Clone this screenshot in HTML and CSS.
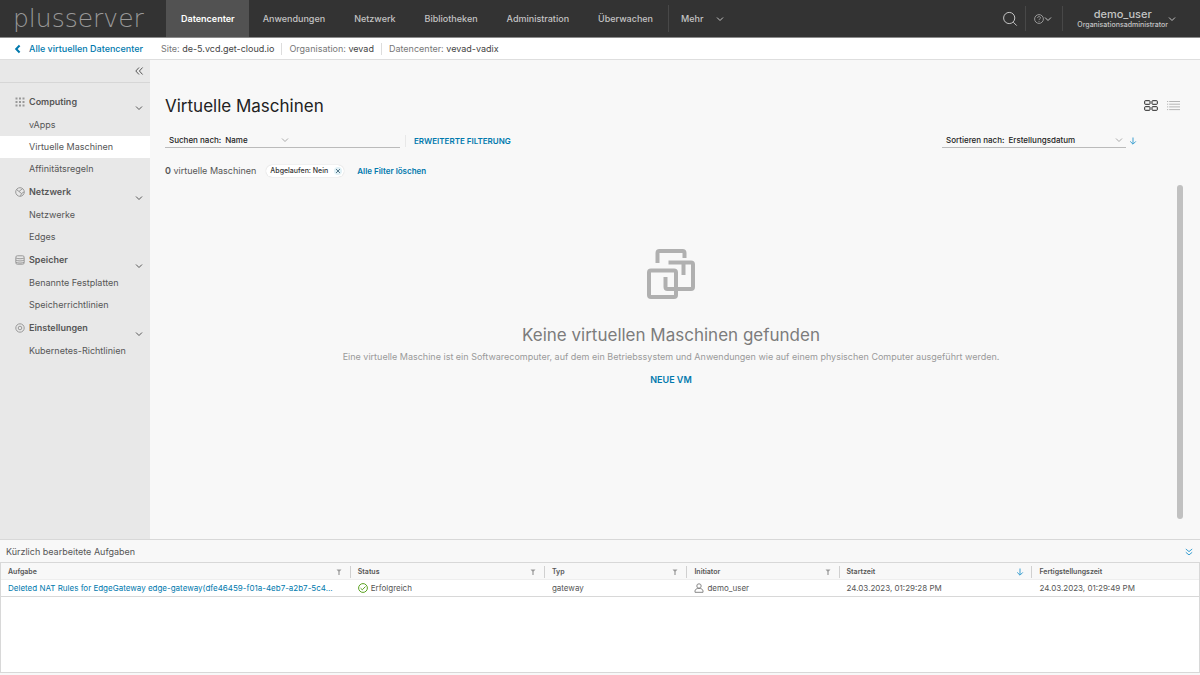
FILE: index.html
```html
<!DOCTYPE html>
<html lang="de">
<head>
<meta charset="utf-8">
<meta name="viewport" content="width=device-width, initial-scale=1">
<title>Virtuelle Maschinen</title>
<link rel="stylesheet" href="styles.css">
</head>
<body>
<svg class="defs" aria-hidden="true">
  <symbol id="chevron" viewBox="0 0 8 8"><path d="M1 2.5 4 5.5 7 2.5"/></symbol>
  <symbol id="arrow-down" viewBox="0 0 8 8"><path d="M4 .5V7M1.2 4.4 4 7.2 6.8 4.4"/></symbol>
  <symbol id="filter" viewBox="0 0 8 8"><path d="M1.5 1.5h5L4.6 3.6V7H3.4V3.6z"/></symbol>
</svg>

<header class="topbar">
  <a class="logo" href="#">plusserver</a>
  <nav class="nav">
    <a class="nav-item active" href="#">Datencenter</a>
    <a class="nav-item" href="#">Anwendungen</a>
    <a class="nav-item" href="#">Netzwerk</a>
    <a class="nav-item" href="#">Bibliotheken</a>
    <a class="nav-item" href="#">Administration</a>
    <a class="nav-item" href="#">Überwachen</a>
  </nav>
  <button class="more">Mehr <svg class="icon s8"><use href="#chevron"/></svg></button>
  <div class="tools">
    <button class="tool search" aria-label="Suchen"><svg class="icon s16" viewBox="0 0 16 16"><circle cx="7.2" cy="7" r="5.6"/><path d="m11.3 11.2 3.4 3.4"/></svg></button>
    <button class="tool help" aria-label="Hilfe"><svg class="icon s10" viewBox="0 0 10 10"><circle cx="5" cy="5" r="4.4"/><path d="M3.6 4c0-1.9 2.9-1.8 2.9-.2C6.500 4.900 5 4.900 5 6.100M5 7v.8"/></svg><svg class="icon s8 bright"><use href="#chevron"/></svg></button>
    <button class="tool user"><span class="user-text"><span class="user-name">demo_user</span><span class="user-role">Organisationsadministrator</span></span><svg class="icon s8 bright"><use href="#chevron"/></svg></button>
  </div>
</header>

<div class="context">
  <a class="back" href="#"><svg class="icon s10 back-icon" viewBox="0 0 10 10"><path d="M6.600 1.500 3.200 5l3.400 3.500"/></svg>Alle virtuellen Datencenter</a>
  <span class="ctx">Site: <b>de-5.vcd.get-cloud.io</b></span>
  <span class="ctx">Organisation: <b>vevad</b></span>
  <span class="ctx">Datencenter: <b>vevad-vadix</b></span>
</div>

<div class="workspace">
  <aside class="sidebar">
    <div class="collapse"><button aria-label="Navigation einklappen"><svg class="icon s10" viewBox="0 0 10 10"><path d="M5 1.500 1.800 5 5 8.500M8.600 1.500 5.400 5l3.200 3.500"/></svg></button></div>
    <nav class="menu">
      <section>
        <button class="group"><svg class="icon s10 dots" viewBox="0 0 10 10"><path d="M.5 1.500h9M.5 5h9M.5 8.500h9"/></svg>Computing<svg class="icon s8 caret"><use href="#chevron"/></svg></button>
        <a href="#">vApps</a>
        <a class="current" href="#">Virtuelle Maschinen</a>
        <a href="#">Affinitätsregeln</a>
      </section>
      <section>
        <button class="group"><svg class="icon s10" viewBox="0 0 10 10"><circle cx="5" cy="5" r="4.300"/><path d="M1.500 2.500 4 4.500 7.500 1.600M4 4.500 6.500 6.500 9 5M6.500 6.500 5.500 9.200"/></svg>Netzwerk<svg class="icon s8 caret"><use href="#chevron"/></svg></button>
        <a href="#">Netzwerke</a>
        <a href="#">Edges</a>
      </section>
      <section>
        <button class="group"><svg class="icon s10" viewBox="0 0 10 10"><rect x=".8" y=".8" width="8.400" height="8.400" rx="1.500"/><path d="M1 3c2 1 6 1 8 0M1 5.200c2 1 6 1 8 0M1 7.300c2 1 6 1 8 0"/></svg>Speicher<svg class="icon s8 caret"><use href="#chevron"/></svg></button>
        <a href="#">Benannte Festplatten</a>
        <a href="#">Speicherrichtlinien</a>
      </section>
      <section>
        <button class="group"><svg class="icon s10" viewBox="0 0 10 10"><circle cx="5" cy="5" r="4.200"/><circle cx="5" cy="5" r="1.800"/></svg>Einstellungen<svg class="icon s8 caret"><use href="#chevron"/></svg></button>
        <a href="#">Kubernetes-Richtlinien</a>
      </section>
    </nav>
  </aside>

  <main class="main">
    <div class="title-row">
      <h1>Virtuelle Maschinen</h1>
      <div class="views">
        <button class="view on" aria-label="Kartenansicht"><svg class="icon" viewBox="0 0 14 11"><rect x=".7" y=".7" width="5.300" height="3.600" rx=".6"/><rect x="8" y=".7" width="5.300" height="3.600" rx=".6"/><rect x=".7" y="6.700" width="5.300" height="3.600" rx=".6"/><rect x="8" y="6.700" width="5.300" height="3.600" rx=".6"/></svg></button>
        <button class="view" aria-label="Listenansicht"><svg class="icon" viewBox="0 0 14 11"><path d="M0 1.500h1.200M0 4.200h1.200M0 6.900h1.200M0 9.600h1.200M2.200 1.500H13M2.200 4.200H13M2.200 6.900H13M2.200 9.600H13"/></svg></button>
      </div>
    </div>

    <div class="filter-row">
      <div class="field search-field">
        <label for="by">Suchen nach:</label>
        <select id="by"><option>Name</option></select>
        <svg class="icon s8"><use href="#chevron"/></svg>
        <input type="text" aria-label="Suchbegriff">
      </div>
      <button class="link advanced">ERWEITERTE FILTERUNG</button>
      <div class="field sort-field">
        <label for="sort">Sortieren nach:</label>
        <select id="sort"><option>Erstellungsdatum</option></select>
        <svg class="icon s8"><use href="#chevron"/></svg>
      </div>
      <button class="direction" aria-label="Absteigend"><svg class="icon s8 blue"><use href="#arrow-down"/></svg></button>
    </div>

    <div class="count-row">
      <span class="count"><b>0</b> virtuelle Maschinen</span>
      <span class="chip">Abgelaufen: Nein <button aria-label="Filter entfernen"><svg class="icon" viewBox="0 0 8 8"><path d="m2 2 4 4M6 2 2 6"/></svg></button></span>
      <button class="link">Alle Filter löschen</button>
    </div>

    <div class="results">
      <div class="empty">
        <svg class="empty-icon" viewBox="0 0 48 50"><path d="M10.500 14V4a2 2 0 0 1 2-2h23a2 2 0 0 1 2 2v5"/><path d="M21.500 13.500H44a2 2 0 0 1 2 2V38a2 2 0 0 1-2 2H20.500a2 2 0 0 1-2-2V28"/><path d="M36.500 14v12"/><rect x="2" y="21.500" width="27" height="26.500" rx="2"/></svg>
        <h2>Keine virtuellen Maschinen gefunden</h2>
        <p>Eine virtuelle Maschine ist ein Softwarecomputer, auf dem ein Betriebssystem und Anwendungen wie auf einem physischen Computer ausgeführt werden.</p>
        <button class="link new-vm">NEUE VM</button>
      </div>
      <div class="scroll-thumb"></div>
    </div>
  </main>
</div>

<section class="tasks">
  <div class="tasks-head"><h3>Kürzlich bearbeitete Aufgaben</h3><button aria-label="Aufgaben einklappen"><svg class="icon s8 blue" viewBox="0 0 8 8"><path d="m.8 1 3.200 2.600L7.200 1M.8 4.300 4 6.900l3.200-2.600"/></svg></button></div>
  <div class="grid">
    <table>
      <colgroup><col class="c-task"><col class="c-status"><col class="c-type"><col class="c-user"><col class="c-start"><col></colgroup>
      <thead>
        <tr>
          <th><div class="th">Aufgabe<svg class="filter"><use href="#filter"/></svg></div></th>
          <th><div class="th">Status<svg class="filter"><use href="#filter"/></svg></div></th>
          <th><div class="th">Typ<svg class="filter"><use href="#filter"/></svg></div></th>
          <th><div class="th">Initiator<svg class="filter"><use href="#filter"/></svg></div></th>
          <th><div class="th">Startzeit<svg class="icon s8 blue"><use href="#arrow-down"/></svg></div></th>
          <th><div class="th">Fertigstellungszeit</div></th>
        </tr>
      </thead>
      <tbody>
        <tr>
          <td><a href="#">Deleted NAT Rules for EdgeGateway edge-gateway(dfe46459-f01a-4eb7-a2b7-5c4...</a></td>
          <td><span class="with-icon"><svg class="icon s10 ok" viewBox="0 0 10 10"><circle cx="5" cy="5" r="4.400"/><path d="m2.600 5.200 1.700 1.600 3.200-3.300"/></svg>Erfolgreich</span></td>
          <td>gateway</td>
          <td><span class="with-icon"><svg class="icon s10 person" viewBox="0 0 10 10"><circle cx="5" cy="3" r="2.200"/><path d="M1 9.300V8c0-1.500 1.500-2.300 2.700-2.500h2.600C7.500 5.700 9 6.500 9 8v1.300z"/></svg>demo_user</span></td>
          <td>24.03.2023, 01:29:28 PM</td>
          <td>24.03.2023, 01:29:49 PM</td>
        </tr>
      </tbody>
    </table>
  </div>
</section>
</body>
</html>
```

FILE: styles.css
```css
* { box-sizing: border-box; }
body {
  margin: 0;
  min-height: 100vh;
  display: flex;
  flex-direction: column;
  background: #f8f8f8;
  color: #565656;
  font: 9px/12px Inter, "Open Sans", sans-serif;
}
button, input, select {
  font: inherit;
  color: inherit;
  background: none;
  border: 0;
  padding: 0;
  margin: 0;
}
button { cursor: pointer; }
a { color: inherit; text-decoration: none; }
h1, h2, h3, p { margin: 0; font-weight: 400; }
.defs { display: none; }

.icon { display: block; flex: none; fill: none; stroke: currentColor; stroke-width: 1; }
.s8 { width: 8px; height: 8px; }
.s10 { width: 10px; height: 10px; }
.s16 { width: 16px; height: 16px; }
.blue { color: #3c9fd0; }

/* Top bar */
.topbar {
  display: flex;
  height: 38px;
  background: #333;
  color: #c4c4c4;
  border-bottom: 1px solid #8c8c8c;
}
.logo {
  width: 166px;
  padding-left: 13px;
  font: 200 25px/38px "DejaVu Sans", sans-serif;
  color: #999;
}
.nav { display: flex; }
.nav-item {
  display: flex;
  align-items: center;
  padding: 0 15px 0 14px;
  font-weight: 500;
}
.nav-item.active { background: #525252; color: #fff; font-weight: 600; padding: 0 14px 0 15px; }
.more {
  display: flex;
  align-items: center;
  gap: 13px;
  margin: 5px 0;
  padding: 0 12px;
  border-left: 1px solid #484848;
  font-weight: 500;
}
.tools { display: flex; margin: 6px 0; margin-left: auto; }
.tool { display: flex; align-items: center; }
.search { padding-right: 7px; }
.help { border-left: 1px solid #484848; border-right: 1px solid #484848; padding: 0 10px 0 8px; color: #999; }
.bright { color: #c4c4c4; }
.user { padding: 0 24px 0 14px; }
.user-text { display: flex; flex-direction: column; align-items: center; }
.user-name { font-size: 11px; font-weight: 500; }
.user-role { font-size: 7px; line-height: 10px; font-weight: 500; }

/* Context bar */
.context {
  display: flex;
  align-items: center;
  height: 22px;
  background: #fff;
  border-bottom: 1px solid #dedede;
  color: #777;
}
.back {
  display: flex;
  align-items: center;
  gap: 6px;
  width: 154px;
  padding-left: 13px;
  color: #0079ad;
  font-weight: 500;
  white-space: nowrap;
}
.back-icon { stroke-width: 2; }
.ctx { padding: 0 7px; }
.ctx + .ctx { border-left: 1px solid #ddd; }
.ctx b { font-weight: 400; color: #444; }

/* Sidebar */
.workspace { display: flex; flex: 1; }
.sidebar { width: 150px; background: #e8e8e8; flex: none; }
.collapse {
  display: flex;
  justify-content: flex-end;
  padding: 6px 6px;
  border-bottom: 1px solid #d6d6d6;
}
.menu { padding-top: 7px; }
.menu section { display: flex; flex-direction: column; }
.group {
  display: flex;
  align-items: center;
  gap: 4px;
  height: 24px;
  padding: 0 7px 0 15px;
  font-weight: 600;
}
.group > .icon:first-child { color: #999; }
.dots { stroke-width: 2; stroke-dasharray: 2 1.5; }
.group .caret { margin-left: auto; margin-top: 12px; }
.menu a { padding: 5px 0 5px 29px; }
.menu .current { background: #fff; }

/* Main area */
.main {
  flex: 1;
  min-width: 0;
  display: flex;
  flex-direction: column;
  padding: 34px 17px 20px 15px;
}
.title-row { display: flex; align-items: center; justify-content: space-between; }
h1 { font-size: 17px; line-height: 24px; color: #222; }
.views { display: flex; gap: 9px; margin: 0 2px 2px 0; }
.view { color: #b5b5b5; }
.view .icon { width: 14px; height: 11px; }
.view.on { color: #222; }

.filter-row { display: flex; align-items: center; margin-top: 15px; }
.field {
  display: flex;
  align-items: center;
  height: 15px;
  padding-left: 4px;
  border-bottom: 1px solid #bbb;
  color: #222;
  font-size: 8px;
  font-weight: 500;
}
.field select { appearance: none; padding-left: 4px; outline: 0; }
.field .icon { color: #aaa; }
.search-field { width: 235px; }
.search-field select { width: 60px; }
.search-field input { flex: 1; min-width: 0; outline: 0; }
.sort-field { width: 184px; margin-left: auto; }
.sort-field select { flex: 1; min-width: 0; }
.sort-field .icon { margin-right: 3px; }
.direction { margin: 0 46px 0 3px; }
.link { color: #0079ad; font-size: 8px; font-weight: 600; }
.advanced { margin-left: 5px; padding-left: 8px; border-left: 1px solid #e8e8e8; }

.count-row { display: flex; align-items: center; margin-top: 17px; }
.count b { font-weight: 600; }
.chip {
  display: flex;
  align-items: center;
  gap: 6px;
  margin: 0 13px 0 10px;
  padding: 0 2px 0 4px;
  border-radius: 6px;
  background: #fff;
  box-shadow: 0 0 1px #bbb;
  font-size: 7px;
  font-weight: 500;
  color: #333;
}
.chip button { border-radius: 50%; background: #e1f1f6; color: #57788a; }
.chip .icon { width: 8px; height: 8px; }

.results { display: flex; flex: 1; margin-top: 8px; }
.empty { flex: 1; display: flex; flex-direction: column; align-items: center; padding-top: 64px; }
.empty-icon { width: 48px; height: 50px; fill: none; stroke: #b0b0b0; stroke-width: 4; }
h2 { margin-top: 24px; font-size: 17px; line-height: 24px; color: #7c7c7c; }
.empty p { margin-top: 4px; color: #9a9a9a; }
.new-vm { margin-top: 11px; font-size: 9px; }
.scroll-thumb { width: 6px; border-radius: 3px; background: #c1c1c1; }

/* Recent tasks */
.tasks { border-top: 1px solid #d8d8d8; padding-bottom: 2px; }
.tasks-head { display: flex; align-items: center; justify-content: space-between; padding: 6px 7px 4px 6px; }
h3 { font-size: 9px; }
.grid { min-height: 111px; border: 1px solid #d8d8d8; background: #fff; }
table { width: 100%; table-layout: fixed; border-collapse: collapse; text-align: left; }
.c-task { width: 29.2%; }
.c-status { width: 16.2%; }
.c-type { width: 11.9%; }
.c-user { width: 12.7%; }
.c-start { width: 16.1%; }
thead { background: #f8f8f8; border-bottom: 1px solid #eee; }
th { padding: 3px 0 1px; font-size: 7px; font-weight: 600; }
.th { display: flex; align-items: center; justify-content: space-between; padding: 0 7px; border-right: 1px solid #d0d0d0; }
th:last-child .th { border-right: 0; }
.filter { width: 8px; height: 8px; fill: #999; }
tbody tr { border-bottom: 1px solid #d8d8d8; }
td { padding: 2px 7px; font-size: 8px; white-space: nowrap; }
td a { color: #0079ad; }
.with-icon { display: flex; align-items: center; gap: 3px; }
.ok { color: #5aa220; }
.person { color: #888; }
```
